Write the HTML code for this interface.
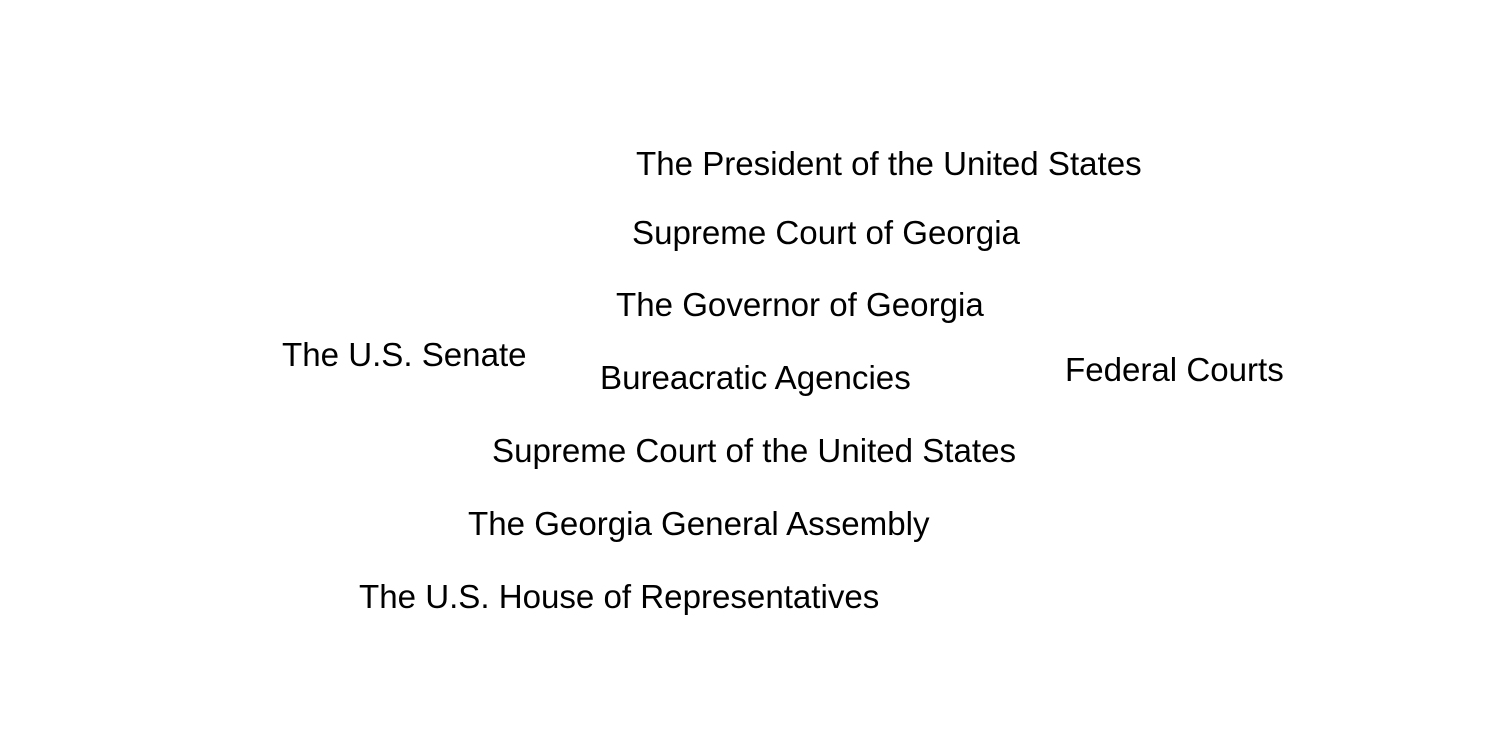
<!DOCTYPE html>
<html><head><meta charset="utf-8"><style>
html,body{margin:0;padding:0;background:#fff;width:1512px;height:756px;overflow:hidden;}
div{position:absolute;font-family:"Liberation Sans",Arial,sans-serif;font-size:33.1px;line-height:33px;color:#000;white-space:nowrap;}
</style></head><body>
<div style="left:636px;top:148px">The President of the United States</div>
<div style="left:632px;top:217px">Supreme Court of Georgia</div>
<div style="left:616px;top:289px">The Governor of Georgia</div>
<div style="left:282px;top:339px">The U.S. Senate</div>
<div style="left:600px;top:362px">Bureacratic Agencies</div>
<div style="left:1065px;top:354px">Federal Courts</div>
<div style="left:492px;top:435px">Supreme Court of the United States</div>
<div style="left:468px;top:508px">The Georgia General Assembly</div>
<div style="left:359px;top:581px">The U.S. House of Representatives</div>
</body></html>
